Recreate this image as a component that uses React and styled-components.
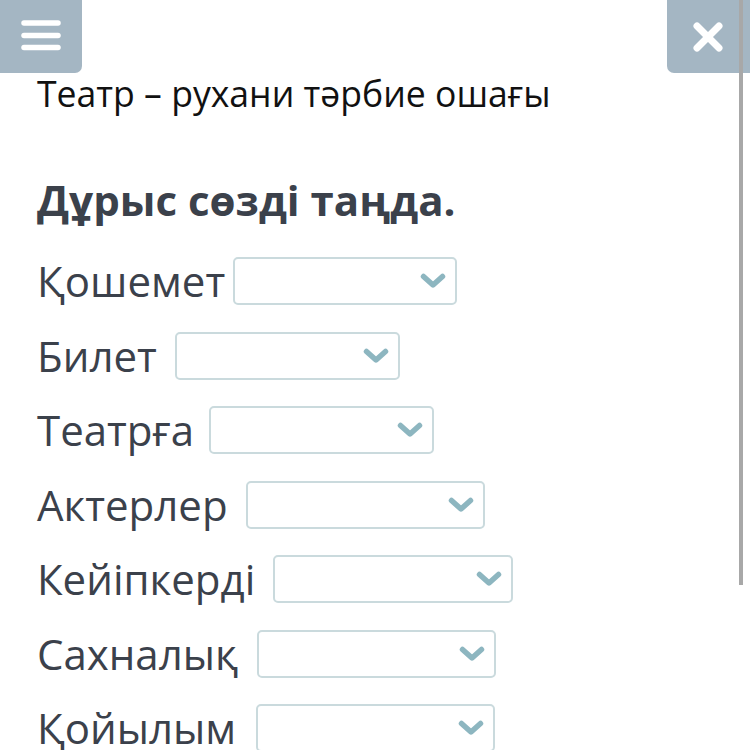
import styled, { createGlobalStyle } from 'styled-components'

const GlobalStyle = createGlobalStyle`
    html, body {
        margin: 0;
        padding: 0;
        background: #fff;
        font-family: "Open Sans", "Noto Sans", sans-serif;
        overflow: hidden;
    }
`

const Page = styled.div`
    position: relative;
    width: 750px;
    height: 750px;
    overflow: hidden;
`

const TopBar = styled.div`
    display: flex;
    justify-content: space-between;
    height: 73px;
`

const MenuButton = styled.button`
    width: ${props => props.$side === 'left' ? '82px' : '83px'};
    height: 73px;
    border: none;
    padding: 0;
    padding-right: ${props => props.$side === 'left' ? '0' : '2px'};
    background: #a4b6c3;
    border-radius: ${props => props.$side === 'left' ? '0 0 7px 0' : '0 0 0 7px'};
    display: flex;
    align-items: center;
    justify-content: center;
    color: #fff;
`

const Scrollbar = styled.div`
    position: absolute;
    top: 0;
    right: 7px;
    width: 4px;
    height: 585px;
    background: #a8a8a8;
`

const Content = styled.div`
    padding: 0 37px;
`

const Title = styled.h1`
    margin: 0;
    margin-top: -2px;
    font-size: 35.6px;
    font-weight: 400;
    color: #111;
    line-height: 44px;
    white-space: nowrap;
`

const Heading = styled.h2`
    margin: 0;
    margin-top: 57px;
    font-size: 42px;
    font-weight: 700;
    color: #3b414b;
    line-height: 56px;
    white-space: nowrap;
`

const List = styled.div`
    display: flex;
    flex-direction: column;
    gap: 26.5px;
    margin-top: 29px;
`

const Row = styled.div`
    display: flex;
    align-items: center;
    gap: 11px;
    height: 48px;
`

const Label = styled.span`
    flex: none;
    width: ${props => props.$w}px;
    font-size: 42px;
    color: #3b414b;
    line-height: 48px;
    white-space: nowrap;
`

const Select = styled.div`
    box-sizing: border-box;
    flex: none;
    width: ${props => props.$w}px;
    height: 48px;
    border: 2px solid #cadadd;
    border-radius: 5px;
    display: flex;
    align-items: center;
    justify-content: flex-end;
    padding-right: 9px;
    color: #8db6c0;
`

const Chevron = () => (
    <svg width="26" height="16" viewBox="0 0 26 16">
        <path d="M3.5 3.5 L13 12 L22.5 3.5" fill="none" stroke="currentColor" strokeWidth="5.5" strokeLinecap="round" strokeLinejoin="round" />
    </svg>
)

const Hamburger = () => (
    <svg width="40" height="36" viewBox="0 0 40 36">
        <g stroke="currentColor" strokeWidth="5.5" strokeLinecap="round">
            <line x1="3" y1="4" x2="37" y2="4" />
            <line x1="3" y1="16.5" x2="37" y2="16.5" />
            <line x1="3" y1="28.5" x2="37" y2="28.5" />
        </g>
    </svg>
)

const Cross = () => (
    <svg width="32" height="32" viewBox="0 0 32 32">
        <g stroke="currentColor" strokeWidth="7" strokeLinecap="round">
            <line x1="5" y1="5" x2="27" y2="27" />
            <line x1="27" y1="5" x2="5" y2="27" />
        </g>
    </svg>
)

const rows = [
    { label: 'Қошемет', lw: 185, w: 224 },
    { label: 'Билет', lw: 127, w: 225 },
    { label: 'Театрға', lw: 161, w: 225 },
    { label: 'Актерлер', lw: 198, w: 239 },
    { label: 'Кейіпкерді', lw: 225, w: 240 },
    { label: 'Сахналық', lw: 209, w: 239 },
    { label: 'Қойылым', lw: 208, w: 239 },
]

const App = () => {
    return (
        <Page>
            <GlobalStyle />
            <TopBar>
                <MenuButton $side="left"><Hamburger /></MenuButton>
                <MenuButton $side="right"><Cross /></MenuButton>
            </TopBar>
            <Content>
                <Title>Театр – рухани тәрбие ошағы</Title>
                <Heading>Дұрыс сөзді таңда.</Heading>
                <List>
                    {rows.map(r => (
                        <Row key={r.label}>
                            <Label $w={r.lw}>{r.label}</Label>
                            <Select $w={r.w}><Chevron /></Select>
                        </Row>
                    ))}
                </List>
            </Content>
            <Scrollbar />
        </Page>
    )
}

export default App
